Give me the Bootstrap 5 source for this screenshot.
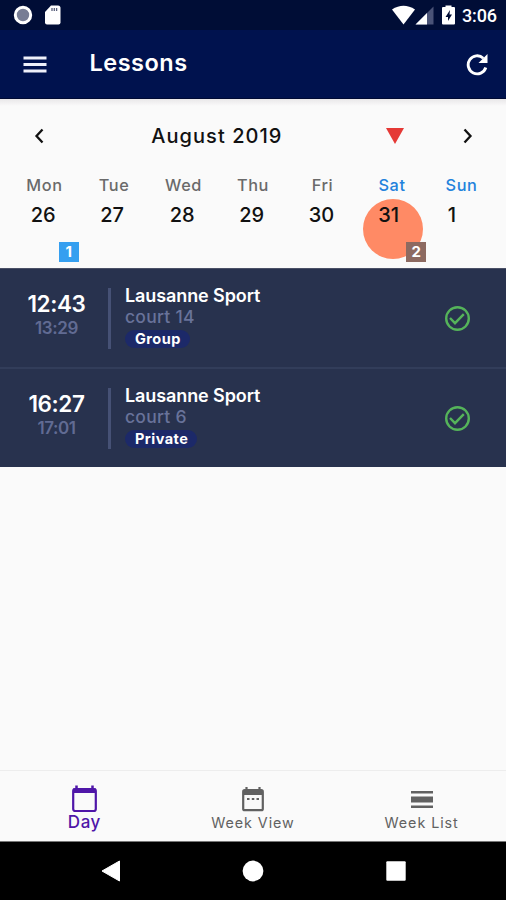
<!DOCTYPE html>
<html lang="en">
<head>
<meta charset="utf-8">
<meta name="viewport" content="width=device-width, initial-scale=1">
<title>Lessons</title>
<link href="https://cdn.jsdelivr.net/npm/bootstrap@5.3.0/dist/css/bootstrap.min.css" rel="stylesheet">
<style>
body{font-family:Inter,"Liberation Sans",sans-serif;background:#fafafa;color:#111;height:900px;overflow:hidden;line-height:1}
svg{display:block;flex:none}
.status-bar{height:30px;background:#000d36;padding:0 9px 0 12px}
.clock{font:500 18px/31px Roboto,sans-serif;margin-left:7px;letter-spacing:-.1px}
.battery{margin-left:7px}
.app-bar{height:69px;background:#00124e;padding:0 17px 0 23px;border-bottom:1px solid #000a33}
.app-title{font-size:23.5px;font-weight:600;letter-spacing:.5px;margin:0 0 2px 42.5px}
.calendar{height:169px;background:linear-gradient(#e9e7e9,#fafafa 7px);padding:0 9.75px}
.month-row{height:73px;padding:0 22px 0 23.5px}
.month{font-size:20px;font-weight:500;letter-spacing:1.05px;margin-left:106px;width:131px;white-space:nowrap}
.pointer{margin-left:103px}
.day{height:95px;width:69.5px;position:relative;padding-top:5px}
.day-name{font-size:16.3px;font-weight:500;line-height:17px;color:#6a6a6a;text-align:center;letter-spacing:.6px}
.day-num{font-size:20px;font-weight:500;line-height:20px;padding-left:21px;margin-top:11px;position:relative}
.weekend .day-name{color:#2382dc}
.disc{position:absolute;left:5.5px;top:26.5px;width:60px;height:60px;background:#ff8a65;border-radius:50%}
.count{position:absolute;left:49px;top:70px;width:20px;height:20px;color:#fff;background:#359ff0;font-size:15px;font-weight:700;line-height:20px;text-align:center}
.count-brown{background:#8d6a61}
.lesson{height:100px;background:#28324e;padding-left:10px}
.lesson + .lesson{border-top:2px solid #323d5a}
.lesson:first-child{height:99px;border-top:1px solid #4a5066}
.times{width:93px;text-align:center;padding-bottom:6px}
.start{font-size:22.5px;font-weight:600;line-height:26px;color:#fff;letter-spacing:-.4px}
.end{font-size:17px;font-weight:600;line-height:22px;color:#616b93;letter-spacing:-.4px}
.rule{width:3px;height:61px;background:#465175;margin-left:5px}
.info{margin-left:14px;height:65px;width:300px}
.place{font-size:18px;font-weight:600;line-height:19px;color:#fff;letter-spacing:-.1px}
.court{font-size:17.5px;font-weight:500;line-height:24px;color:#69739a;letter-spacing:.25px}
.tag{font-size:14.5px;font-weight:700;line-height:17px;height:18px;color:#fff;background:#1c2969;padding:0 9px 0 10px;border-radius:9px;display:inline-block;vertical-align:top;margin-top:1px;letter-spacing:.45px}
.check{margin-left:19px}
.tabs{height:72px;border-top:1px solid #ededed;color:#616161;border-bottom:1px solid #777}
.tab{width:168.67px}
.tab span{font-size:14.3px;line-height:18px;letter-spacing:.95px;margin-top:2px}
.tab.active{color:#4f16a8}
.tab.active span{font-size:17px;font-weight:500;letter-spacing:.5px;margin-top:-1px}
.tab.active svg{margin-top:-2px}
.sys-bar{height:58px;background:#000;padding:0 99px 0 101px}
</style>
<script src="https://cdn.jsdelivr.net/npm/bootstrap@5.3.0/dist/js/bootstrap.bundle.min.js"></script>
</head>
<body class="d-flex flex-column">
<header class="text-white">
  <div class="status-bar d-flex align-items-center">
    <svg width="22" height="22" viewBox="0 0 22 22"><circle cx="11" cy="11" r="7.700" fill="#777d94" stroke="#fff" stroke-width="3"/></svg>
    <svg class="ms-2" width="21" height="22" viewBox="0 0 21 22"><path d="M9 1.500h7q2.500 0 2.500 2.500v14.500q0 2-2 2H5q-2 0-2-2V8z" fill="#fff"/><path d="M10 4v3M12.300 4v3M14.600 4v3" stroke="#59607c" stroke-width="1.300"/></svg>
    <svg class="ms-auto" width="23" height="20" viewBox="0 0 23 20"><path d="M0 4.500Q11.500-3 23 4.500L11.500 19.500z" fill="#fff"/></svg>
    <svg width="20" height="20" viewBox="0 0 20 20"><path d="M18.500 1.500v18H.5z" fill="#4a5377"/><path d="M12 8v11.500H.5z" fill="#fff"/></svg>
    <svg class="battery" width="13" height="20" viewBox="0 0 13 20"><path d="M3.500 2V.5h6V2H12q1 0 1 1v15.500q0 1-1 1H1q-1 0-1-1V3q0-1 1-1z" fill="#fff"/><path d="M8 5L3.500 12h2.500v4l4-6.500H7.500z" fill="#000d36"/></svg>
    <span class="clock">3:06</span>
  </div>
  <nav class="app-bar d-flex align-items-center" aria-label="Lessons">
    <svg width="24" height="18" viewBox="0 0 24 18"><path d="M.5 3h23M.5 9.500h23M.5 16h23" stroke="#eef0fa" stroke-width="2.900"/></svg>
    <h1 class="app-title">Lessons</h1>
    <svg class="ms-auto" width="24" height="24" viewBox="0 0 24 24"><path d="M20.800 15.500A9 9 0 1 1 18.300 6.200" fill="none" stroke="#fff" stroke-width="2.900"/><path d="M22.500 2v9h-9z" fill="#fff"/></svg>
  </nav>
</header>
<section class="calendar">
  <div class="month-row d-flex align-items-center">
    <svg width="12" height="16" viewBox="0 0 12 16"><path d="M9.500 1.500L3.500 8l6 6.500" fill="none" stroke="#111" stroke-width="2.300"/></svg>
    <div class="month">August 2019</div>
    <svg class="pointer" width="20" height="18" viewBox="0 0 20 18"><path d="M1 1h18L10 17z" fill="#e53935"/></svg>
    <svg class="ms-auto" width="12" height="16" viewBox="0 0 12 16"><path d="M2.500 1.500L8.500 8l-6 6.500" fill="none" stroke="#111" stroke-width="2.300"/></svg>
  </div>
  <div class="d-flex">
    <div class="day"><div class="day-name">Mon</div><div class="day-num">26</div><span class="count">1</span></div>
    <div class="day"><div class="day-name">Tue</div><div class="day-num">27</div></div>
    <div class="day"><div class="day-name">Wed</div><div class="day-num">28</div></div>
    <div class="day"><div class="day-name">Thu</div><div class="day-num">29</div></div>
    <div class="day"><div class="day-name">Fri</div><div class="day-num">30</div></div>
    <div class="day weekend"><div class="disc"></div><div class="day-name">Sat</div><div class="day-num">31</div><span class="count count-brown">2</span></div>
    <div class="day weekend"><div class="day-name">Sun</div><div class="day-num">1</div></div>
  </div>
</section>
<main class="flex-grow-1">
  <article class="lesson d-flex align-items-center">
    <div class="times"><div class="start">12:43</div><div class="end">13:29</div></div>
    <div class="rule"></div>
    <div class="info"><div class="place">Lausanne Sport</div><div class="court">court 14</div><span class="tag">Group</span></div>
    <svg class="check" width="27" height="27" viewBox="0 0 27 27" fill="none" stroke="#55b35a" stroke-width="2.400"><circle cx="13.500" cy="13.500" r="11.300"/><path d="M6 13l5 5.200L19.800 9.200"/></svg>
  </article>
  <article class="lesson d-flex align-items-center">
    <div class="times"><div class="start">16:27</div><div class="end">17:01</div></div>
    <div class="rule"></div>
    <div class="info"><div class="place">Lausanne Sport</div><div class="court">court 6</div><span class="tag">Private</span></div>
    <svg class="check" width="27" height="27" viewBox="0 0 27 27" fill="none" stroke="#55b35a" stroke-width="2.400"><circle cx="13.500" cy="13.500" r="11.300"/><path d="M6 13l5 5.200L19.800 9.200"/></svg>
  </article>
</main>
<nav class="tabs d-flex" aria-label="Views">
  <div class="tab active d-flex flex-column align-items-center pt-3">
    <svg width="27" height="29" viewBox="0 0 27 29"><path d="M5.500 .5v4M21.500 .5v4" stroke="currentColor" stroke-width="2.500"/><rect x="2.200" y="4" width="22.600" height="22" rx="2" fill="none" stroke="currentColor" stroke-width="2.200"/><path d="M2 3.500h23V8H2z" fill="currentColor"/></svg>
    <span>Day</span>
  </div>
  <div class="tab d-flex flex-column align-items-center pt-3">
    <svg width="24" height="25" viewBox="0 0 24 25"><path d="M5.500 0v4M18.500 0v4" stroke="currentColor" stroke-width="2.200"/><rect x="2.200" y="3.200" width="19.600" height="20" rx="1.500" fill="none" stroke="currentColor" stroke-width="2.200"/><path d="M2 3h20v5H2zM6 11h2.500v2H6zM10.800 11h2.500v2h-2.500zM15.500 11H18v2h-2.500z" fill="currentColor"/></svg>
    <span>Week View</span>
  </div>
  <div class="tab d-flex flex-column align-items-center pt-3">
    <svg width="24" height="25" viewBox="0 0 24 25"><path d="M1 4h22v2.500H1zM1 9.500h22V15.500H1zM1 18.500h22V21H1z" fill="currentColor"/></svg>
    <span>Week List</span>
  </div>
</nav>
<footer class="sys-bar d-flex align-items-center justify-content-between">
  <svg width="20" height="22" viewBox="0 0 20 22"><path d="M1 11L18.500 1v20z" fill="#fff" stroke="#fff" stroke-linejoin="round"/></svg>
  <svg width="22" height="22" viewBox="0 0 22 22"><circle cx="11" cy="11" r="10.400" fill="#fff"/></svg>
  <svg width="22" height="22" viewBox="0 0 22 22"><rect x="1.300" y="1.300" width="19.400" height="19.400" rx="1" fill="#fff"/></svg>
</footer>
</body>
</html>
